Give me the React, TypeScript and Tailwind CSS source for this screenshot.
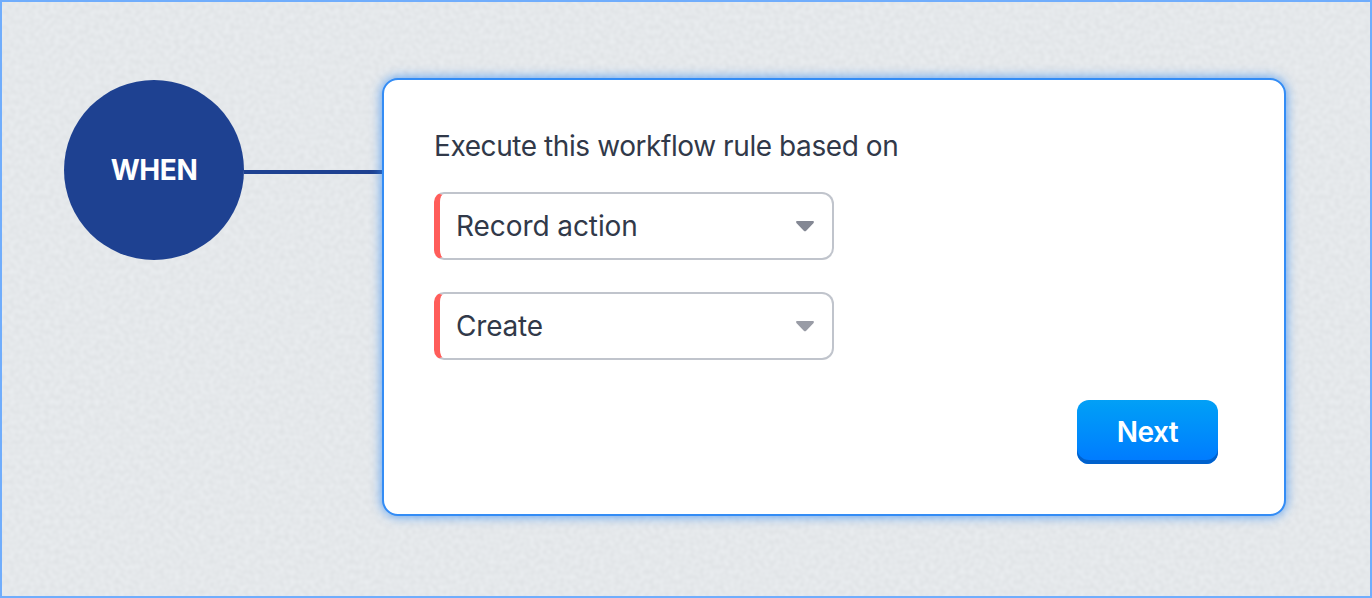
import React from 'react';

interface SelectFieldProps {
  value: string;
  tracking: string;
  arrow: string;
}

function PaperTexture() {
  return (
    <svg className="absolute inset-0 w-full h-full" aria-hidden="true">
      <filter id="paper" x="0" y="0" width="100%" height="100%" colorInterpolationFilters="sRGB">
        <feTurbulence type="fractalNoise" baseFrequency="0.2" numOctaves={1} seed={7} />
        <feColorMatrix
          values="0.055 0 0 0 0.869
                  0.055 0 0 0 0.882
                  0.055 0 0 0 0.893
                  0 0 0 0 1"
        />
      </filter>
      <rect width="100%" height="100%" filter="url(#paper)" />
    </svg>
  );
}

function SelectField({ value, tracking, arrow }: SelectFieldProps) {
  return (
    <button className="flex items-center justify-between w-[400px] h-[68px] pl-4 pr-[18px] bg-white border-2 border-l-[6px] border-[#c0c4cc] border-l-[#ff5d5a] rounded-xl rounded-l-[10px] text-left">
      <span className={`text-[28px] leading-8 ${tracking}`}>{value}</span>
      <svg className={`w-[18px] h-[11px] ${arrow}`} viewBox="0 0 18 11" fill="currentColor">
        <path d="M1.2 0H16.8C18 0 18.3 1.4 17.4 2.2L10.2 9.7Q9 10.9 7.8 9.7L.6 2.2C-.3 1.4 0 0 1.2 0Z" />
      </svg>
    </button>
  );
}

export default function App() {
  return (
    <div className="relative w-[1372px] h-[598px] overflow-hidden bg-[#e4e8eb] font-['Inter',sans-serif] text-[#313949]">
      <PaperTexture />

      <div className="relative flex items-start h-full border-2 border-[#70adfc] pl-[62px] pt-[76px]">
        {/* Trigger node */}
        <div className="flex items-center justify-center shrink-0 size-[180px] mt-0.5 rounded-full bg-[#1e4191]">
          <span className="text-[28px] leading-8 font-bold text-white tracking-[-0.4px]">WHEN</span>
        </div>
        <div className="shrink-0 w-[138px] h-1 mt-[92px] bg-[#1e4191]" />

        {/* Rule card */}
        <div className="flex flex-col shrink-0 w-[904px] h-[438px] pl-[50px] pr-[66px] pt-[50px] bg-white border-2 border-[#338cf5] rounded-2xl shadow-[0_0_12px_rgba(51,140,245,0.85)]">
          <h1 className="h-8 text-[28px] leading-8 tracking-[-0.42px] whitespace-nowrap">
            Execute this workflow rule based on
          </h1>
          <div className="flex flex-col gap-8 mt-[30px]">
            <SelectField value="Record action" tracking="tracking-[-0.08px]" arrow="text-[#848894]" />
            <SelectField value="Create" tracking="tracking-[-0.2px]" arrow="text-[#999ca6]" />
          </div>
          <button className="self-end mt-10 w-[141px] h-16 rounded-xl bg-linear-to-b from-[#03a0f6] to-[#0079ff] shadow-[inset_0_-4px_0_#0061cc] text-[28px] leading-8 font-semibold tracking-[-0.5px] text-white">
            Next
          </button>
        </div>
      </div>
    </div>
  );
}
